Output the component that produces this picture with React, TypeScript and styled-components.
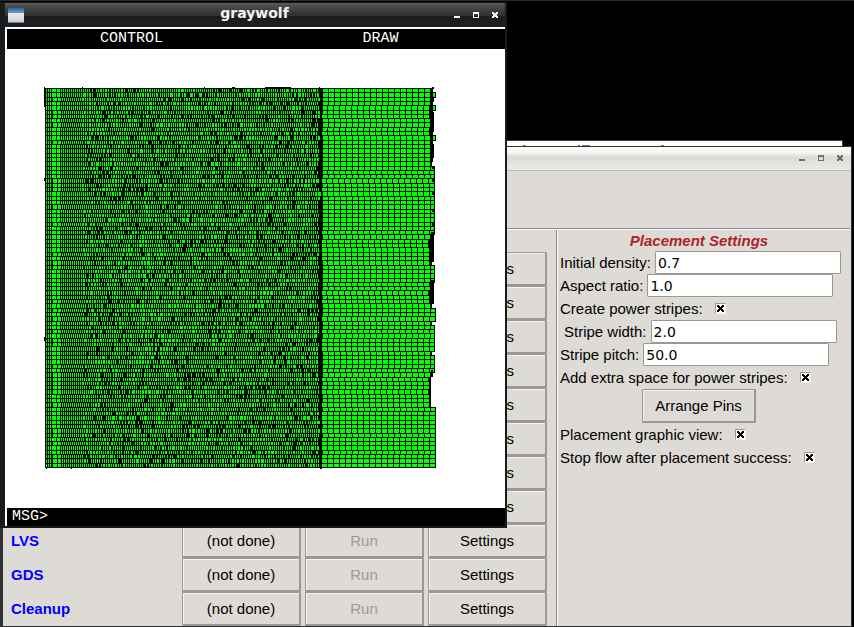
import React from "react";
import styled, { createGlobalStyle, css } from "styled-components";

const sans = `"Liberation Sans", Arial, sans-serif`;
const dejavu = `"DejaVu Sans", sans-serif`;
const mono = `"Liberation Mono", monospace`;
const face = "#dedbd6";

const GlobalStyle = createGlobalStyle`
  * { box-sizing: border-box; }
  html, body { margin: 0; height: 100%; background: #000; }
  #root { height: 100%; }
  button, input { font: inherit; color: inherit; margin: 0; }
`;

const Desktop = styled.main`
  position: relative;
  height: 100vh;
  min-height: 600px;
  overflow: hidden;
  background: #000;
  border-top: 1px solid #2b2b2b;
  font-family: ${sans};
  font-size: 15px;
  line-height: 17px;
  color: #000;
`;

/* ---------- windows ---------- */

const DesktopWindow = styled.section`
  position: absolute;
  display: flex;
  flex-direction: column;
`;

const BackWindow = styled(DesktopWindow)`
  top: 139px;
  left: 0;
  right: 11px;
  height: 40px;
  background: #fff;
  border: 1px solid #3c3c3c;
  align-items: flex-end;
`;

const FlowWindow = styled(DesktopWindow)`
  top: 145px;
  left: 0;
  right: 2px;
  bottom: 0;
  background: ${face};
  border: solid #303030;
  border-width: 1px 1px 1px 3px;
`;

const GraywolfWindow = styled(DesktopWindow)`
  top: 1px;
  left: 0;
  width: calc(100% - 347px);
  background: #fff;
  border: 3px solid #191b1b;
  border-width: 1px 2px 2px 5px;
`;

const TitleBar = styled.header<{ $dark?: boolean }>`
  display: flex;
  align-items: center;
  justify-content: flex-end;
  flex: none;
  ${(p) =>
    p.$dark
      ? css`
          height: 24px;
          padding: 0 1px 0 3px;
          background: linear-gradient(#5a5a5a 0, #464646 20%, #2f2f2f 54%, #1c1c1c 56%, #202020 100%);
          color: #f2f2f2;
        `
      : css`
          height: 24px;
          padding: 0 2px 1px 0;
          background: linear-gradient(#fff 0, #f4f4f2 25%, #dcdbd6 45%, #e4e4df 70%, #e8eae4 100%);
          border-bottom: 1px solid #b9c1a0;
          color: #6d706b;
        `}
`;

const WindowTitle = styled.h1`
  flex: 1;
  align-self: flex-start;
  margin: 0;
  padding-left: 38px;
  text-align: center;
  font: bold 14px/20px ${dejavu};
`;

const TitleButton = styled.button`
  width: 19px;
  height: 16px;
  padding: 0;
  border: 0;
  background: none;
  display: grid;
  place-items: center;
`;

const AppIcon = () => (
  <svg width="16" height="15" viewBox="0 0 16 15" aria-hidden="true">
    <defs>
      <linearGradient id="paper" x1="0" y1="0" x2="0" y2="1">
        <stop offset="0" stopColor="#e9e9ea" />
        <stop offset="1" stopColor="#cfd0d2" />
      </linearGradient>
      <linearGradient id="caption" x1="0" y1="0" x2="0" y2="1">
        <stop offset="0" stopColor="#2f5f9f" />
        <stop offset="1" stopColor="#6f9fdc" />
      </linearGradient>
    </defs>
    <rect width="16" height="15" fill="#5b86c0" />
    <rect width="16" height="5" fill="url(#caption)" />
    <rect y="5" width="16" height="9" fill="url(#paper)" />
  </svg>
);

const TitleButtons = () => (
  <>
    <TitleButton aria-label="Minimize">
      <svg width="6" height="6" fill="currentColor" shapeRendering="crispEdges">
        <rect x="0" y="4" width="6" height="2" />
      </svg>
    </TitleButton>
    <TitleButton aria-label="Maximize">
      <svg width="6" height="6" fill="currentColor" shapeRendering="crispEdges">
        <path fillRule="evenodd" d="M0 0H6V6H0ZM1 2V5H5V2Z" />
      </svg>
    </TitleButton>
    <TitleButton aria-label="Close">
      <svg width="6" height="6" fill="currentColor" shapeRendering="crispEdges">
        <path d="M0 0H2V1H4V0H6V2H5V4H6V6H4V5H2V6H0V4H1V2H0Z" />
      </svg>
    </TitleButton>
  </>
);

/* ---------- graywolf ---------- */

const Viewer = styled.div`
  padding: 2px 0 0 2px;
`;

const MenuBar = styled.nav`
  display: grid;
  grid-template-columns: 1fr 1fr;
  height: 20px;
  background: #000;
`;

const MenuItem = styled.button`
  padding: 0;
  border: 0;
  background: none;
  color: #fff;
  font: 15px/18px ${mono};
`;

const Canvas = styled.div`
  padding: 38px 0 39px 37px;
  background: #fff;
`;

const Chip = styled.svg`
  display: block;
`;

const MessageBar = styled.label`
  display: flex;
  height: 18px;
  padding-left: 5px;
  gap: 4px;
  background: #000;
  color: #fff;
  font: 15px/18px ${mono};
`;

const MessageInput = styled.input`
  flex: 1;
  min-width: 0;
  padding: 0;
  border: 0;
  outline: 0;
  background: none;
  color: #fff;
`;

const ROWS = 88;
const CHIP_HEIGHT = 379;

const rowEnd = (y: number) => {
  if (y < 74) return [5, 18, 48].some((v) => Math.abs(y - v) < 2) ? 392 : 388;
  if (y < 144) return 391;
  if (y < 176) return 388;
  if (y < 192) return 391;
  if (y < 216) return 388;
  if (y < 230) return 392;
  if (y < 234) return 388;
  if (y < 257) return 391;
  if (y < 269) return y % 3 ? 388 : 391;
  if (y < 282) return 391;
  if (y < 318) return 387;
  return 392;
};

const buildChip = () => {
  let seed = 20417;
  const rnd = () => {
    seed = (seed * 1103515245 + 12345) % 2147483648;
    return seed / 2147483648;
  };
  let green = "";
  let body = "";
  for (let i = 0; i < ROWS; i++) {
    const y = Math.round((i * CHIP_HEIGHT) / ROWS);
    const next = Math.round(((i + 1) * CHIP_HEIGHT) / ROWS);
    const h = next - y - 1;
    const end = rowEnd(y);
    body += `M1 ${y}H${end}v${h + 2}H1Z`;
    const cell = (x: number, w: number) => {
      green += `M${x} ${y + 1}h${w}v${h}h-${w}Z`;
    };
    cell(2, 1);
    cell(4, 1);
    cell(6, 1);
    const shift = rnd() < 0.4 ? 1 : 0;
    cell(8 + shift, 4);
    cell(13 + shift, 3);
    let x = 17 + shift;
    while (x < 275) {
      const calm = x < 38;
      const w = calm || rnd() < 0.8 ? 1 : rnd() < 0.85 ? 2 : 3;
      cell(x, w);
      const g = rnd();
      x += w + (calm || g < 0.85 ? 1 : g < 0.94 ? 2 : g < 0.98 ? 3 : 4);
    }
    x = 278 + (rnd() < 0.3 ? 0 : 1);
    const first = rnd() < 0.25 ? 4 : 5;
    cell(x, first);
    x += first + 1;
    while (x + 5 < end) {
      cell(x, 5);
      x += 6;
    }
    if (end > 388 && end - x > 1) cell(x, end - x - 1);
  }
  return { green, body };
};

const chip = buildChip();

const Placement = () => (
  <Chip width="394" height="382" viewBox="0 -1 394 382" role="img" aria-label="Cell placement" shapeRendering="crispEdges">
    <path d={chip.body} fill="#000" />
    <path d={chip.green} fill="#0f0" />
    <path d="M0 -1h1v20h-1ZM38 -1h1v1h-1ZM160 -1h1v1h-1ZM188 -1h3v1h-3ZM221 -1h26v1h-26ZM275 -1h1v1h-1ZM388 -1h2v2h-2ZM386 0h3v74h-3ZM389 10h1v4h-1ZM389 24h1v20h-1ZM389 56h1v14h-1ZM387 144h3v30h-3ZM387 192h3v24h-3ZM387 282h2v7h-2ZM0 90h1v3H0ZM0 249h1v4H0ZM277 2h1v378h-1ZM2 380h1v1h-1ZM27 380h1v1h-1ZM276 379h2v2h-2Z" />
    <path d="M389 78v3M389 91v3M389 104v3M389 121v3M389 135v3" stroke="#000" strokeWidth="2" />
  </Chip>
);

/* ---------- flow manager ---------- */

const Toolbar = styled.div`
  flex: none;
  height: 59px;
  border-bottom: 1px solid #fff;
  box-shadow: inset 0 -1px #8b8991;
  margin-right: 1px;
`;

const Panes = styled.div`
  display: flex;
  flex: 1;
  min-height: 0;
  overflow: hidden;
`;

const FlowPane = styled.div`
  flex: 1;
  padding: 22px 9px 0 8px;
`;

const FlowGrid = styled.div`
  display: grid;
  grid-template-columns: 1fr 119px 119px 119px;
  column-gap: 4px;
`;

const StepName = styled.div`
  height: 34px;
  font-weight: bold;
  line-height: 34px;
  color: #00f;
`;

const PushButton = styled.button<{ $column?: number }>`
  ${(p) => p.$column && `grid-column: ${p.$column};`}
  height: 34px;
  padding: 0 12px;
  border: 1px solid #9b9791;
  border-right-width: 2px;
  border-bottom-width: 2px;
  border-radius: 1px;
  background: ${face};
  box-shadow: inset 1px 1px #f3f2f0;
  &:disabled {
    color: #9c9a96;
  }
`;

const SettingsPane = styled.form`
  flex: none;
  width: 295px;
  border-left: 1px solid #8b8991;
  box-shadow: inset 1px 0 #fff;
  padding: 0 13px 0 3px;
`;

const PaneTitle = styled.h2`
  margin: 0;
  padding-top: 1px;
  height: 21px;
  font: italic bold 15px/19px ${sans};
  text-align: center;
  color: #aa2528;
`;

const Field = styled.label<{ $indent?: boolean }>`
  display: flex;
  align-items: center;
  height: 23px;
  padding-left: ${(p) => (p.$indent ? 4 : 0)}px;
  white-space: nowrap;
`;

const TextInput = styled.input`
  flex: none;
  width: 186px;
  height: 23px;
  margin-left: 4px;
  padding: 0 2px;
  border: 1px solid #9b9791;
  border-radius: 1px;
  background: #fff;
  font: 14px/19px ${dejavu};
`;

const xMark = `url("data:image/svg+xml,%3Csvg xmlns='http://www.w3.org/2000/svg' width='7' height='7' shape-rendering='crispEdges'%3E%3Cpath d='M0 0h2v1h1v1h1v-1h1v-1h2v2h-1v1h-1v1h1v1h1v2h-2v-1h-1v-1h-1v1h-1v1h-2v-2h1v-1h1v-1h-1v-1h-1z'/%3E%3C/svg%3E")`;

const CheckBox = styled.input.attrs({ type: "checkbox" })`
  appearance: none;
  width: 11px;
  height: 11px;
  margin-left: 12px;
  border: 1px solid #9b9791;
  border-color: #9b9791 #f3f2f0 #f3f2f0 #9b9791;
  background-color: #fff;
  &:checked {
    background-image: ${xMark};
    background-repeat: no-repeat;
    background-position: center;
  }
`;

const ButtonRow = styled.div`
  display: flex;
  justify-content: center;
  height: 34px;
`;

const TextField = ({ label, value, indent }: { label: string; value: string; indent?: boolean }) => (
  <Field $indent={indent}>
    {label}
    <TextInput defaultValue={value} />
  </Field>
);

const CheckField = ({ label }: { label: string }) => (
  <Field>
    {label}
    <CheckBox defaultChecked />
  </Field>
);

const finalSteps = ["LVS", "GDS", "Cleanup"];

export default function App() {
  return (
    <>
      <GlobalStyle />
      <Desktop>
        <BackWindow aria-hidden="true">
          <svg width="320" height="5" viewBox="0 0 320 5" fill="#77797c">
            <path d="M1 4h3v1h-3zM56 4h2v1h-2zM60 4h8v1h-8zM139 4h3v1h-3z" />
          </svg>
        </BackWindow>

        <FlowWindow>
          <TitleBar>
            <TitleButtons />
          </TitleBar>
          <Toolbar />
          <Panes>
            <FlowPane>
              <FlowGrid>
                {Array.from({ length: 8 }, (_, i) => (
                  <PushButton key={i} $column={4}>
                    Settings
                  </PushButton>
                ))}
                {finalSteps.map((step) => (
                  <React.Fragment key={step}>
                    <StepName>{step}</StepName>
                    <PushButton>(not done)</PushButton>
                    <PushButton disabled>Run</PushButton>
                    <PushButton>Settings</PushButton>
                  </React.Fragment>
                ))}
              </FlowGrid>
            </FlowPane>
            <SettingsPane onSubmit={(e) => e.preventDefault()}>
              <PaneTitle>Placement Settings</PaneTitle>
              <TextField label="Initial density:" value="0.7" />
              <TextField label="Aspect ratio:" value="1.0" />
              <CheckField label="Create power stripes:" />
              <TextField label="Stripe width:" value="2.0" indent />
              <TextField label="Stripe pitch:" value="50.0" />
              <CheckField label="Add extra space for power stripes:" />
              <ButtonRow>
                <PushButton type="button">Arrange Pins</PushButton>
              </ButtonRow>
              <CheckField label="Placement graphic view:" />
              <CheckField label="Stop flow after placement success:" />
            </SettingsPane>
          </Panes>
        </FlowWindow>

        <GraywolfWindow>
          <TitleBar $dark>
            <AppIcon />
            <WindowTitle>graywolf</WindowTitle>
            <TitleButtons />
          </TitleBar>
          <Viewer>
            <MenuBar>
              <MenuItem>CONTROL</MenuItem>
              <MenuItem>DRAW</MenuItem>
            </MenuBar>
            <Canvas>
              <Placement />
            </Canvas>
            <MessageBar>
              MSG&gt;
              <MessageInput />
            </MessageBar>
          </Viewer>
        </GraywolfWindow>
      </Desktop>
    </>
  );
}
